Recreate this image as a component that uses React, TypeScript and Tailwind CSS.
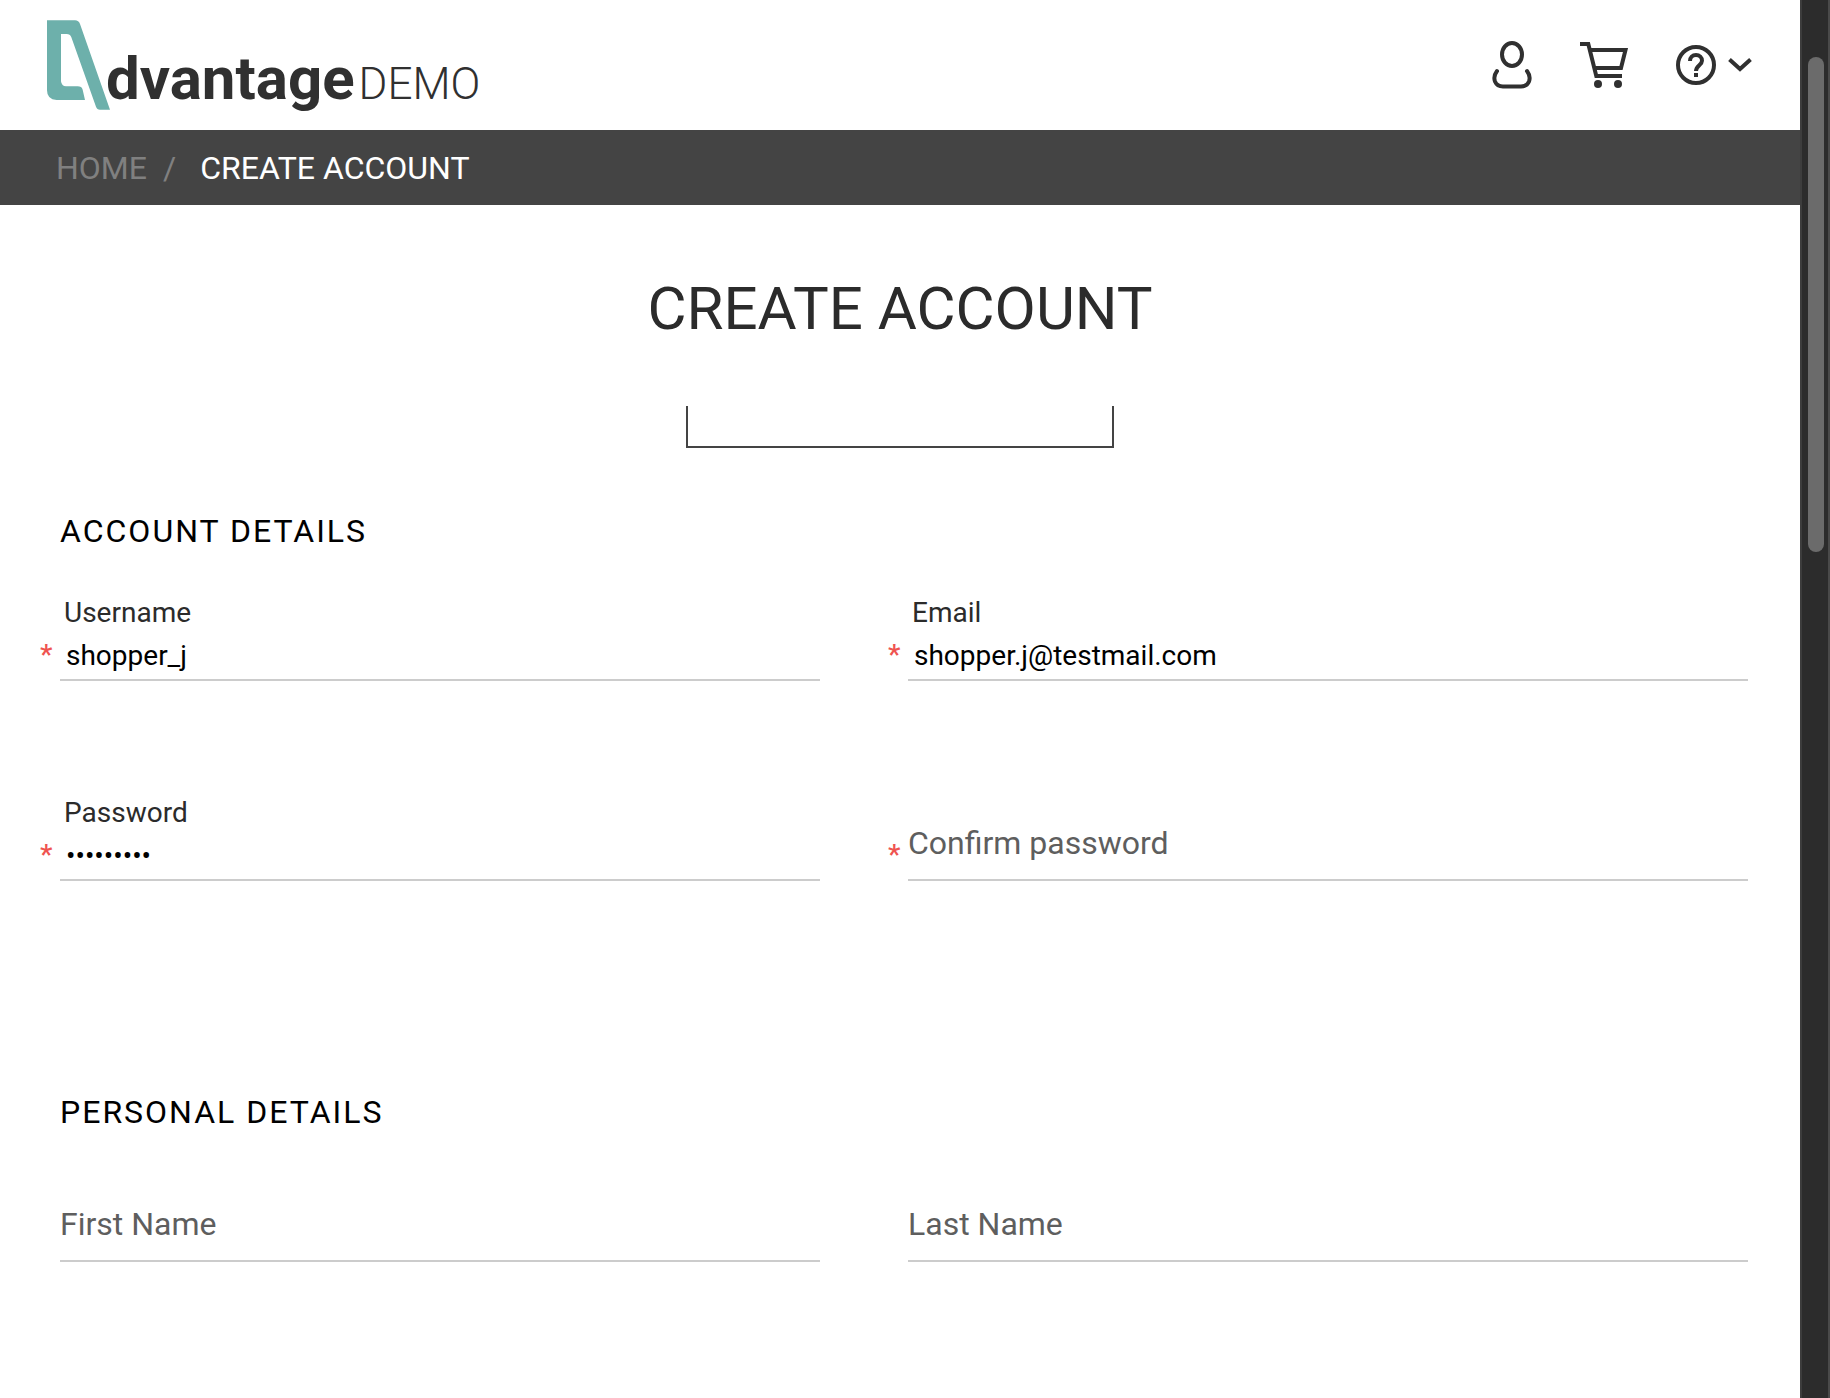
import { useId, useState } from "react";

function Logo() {
  return (
    <a href="#home" aria-label="Advantage DEMO" className="flex items-start text-[#303030]">
      <svg viewBox="51 60 189 268" className="h-[90px] w-[63px] fill-[#6db0ab]" aria-hidden="true">
        <path d="M51 60H135Q146 60 150 71L240 328H210Q201 328 198 319L124 111Q120 101 110 101H93V243Q95 258 108 258H143Q155 258 158 268L165 299H80Q51 298 51 270Z" />
      </svg>
      <span className="-ml-1 flex items-baseline gap-1 pt-[19px]">
        <span className="text-[60px] leading-[80px] font-bold">dvantage</span>
        <span className="text-[44px] leading-[80px] font-light">DEMO</span>
      </span>
    </a>
  );
}

function UserIcon() {
  return (
    <svg viewBox="0 0 40 48" className="h-12 w-10" fill="none" stroke="currentColor" strokeWidth="4" strokeLinecap="round" aria-hidden="true">
      <ellipse cx="20" cy="13.5" rx="10" ry="11.5" />
      <path d="M5 30C2 34 1.7 37 3 40.5C4.5 44 7 45.5 11 45.5H29C33 45.5 35.5 44 37 40.5C38.3 37 38 34 35 30" />
    </svg>
  );
}

function CartIcon() {
  return (
    <svg viewBox="0 0 48 46" className="h-[46px] w-12" fill="none" stroke="currentColor" strokeWidth="4" aria-hidden="true">
      <path d="M0 2H8.3L16.3 34H42" />
      <path d="M10 8H45.5L41 26H15" />
      <circle cx="18" cy="42" r="4" fill="currentColor" stroke="none" />
      <circle cx="38" cy="42" r="4" fill="currentColor" stroke="none" />
    </svg>
  );
}

function HelpIcon() {
  return (
    <svg viewBox="0 0 40 40" className="size-10" fill="none" stroke="currentColor" strokeWidth="4" aria-hidden="true">
      <circle cx="20" cy="20" r="18" />
      <path d="M14 16C14 12.5 16.5 10 20 10C23.5 10 26 12.5 26 15.7C26 20 20 20.5 20 26" />
      <path d="M18 30H22" />
    </svg>
  );
}

function ChevronIcon() {
  return (
    <svg viewBox="0 0 24 14" className="h-[14px] w-6" fill="none" stroke="currentColor" strokeWidth="4" aria-hidden="true">
      <path d="M1.5 1.5L12 11L22.5 1.5" />
    </svg>
  );
}

type FieldProps = { label: string; type?: string; initial?: string; required?: boolean };

function Field({ label, type = "text", initial = "", required = false }: FieldProps) {
  const id = useId();
  const [value, setValue] = useState(initial);
  const filled = value !== "";
  return (
    <div className="flex h-[88px] items-end">
      <span className="w-5 shrink-0 pb-[10px] text-[28px] leading-8 font-medium text-[#ef5350]" aria-hidden="true">
        {required ? "*" : ""}
      </span>
      <div className="relative flex-1">
        <label
          htmlFor={id}
          className={
            filled
              ? "block pl-1 text-[28px] leading-10 text-[#2b2b2b]"
              : "absolute bottom-[18px] left-0 text-[32px] leading-10 text-[#5e5e5e]"
          }
        >
          {label}
        </label>
        <input
          id={id}
          type={type}
          value={value}
          required={required}
          onChange={(e) => setValue(e.target.value)}
          className="block h-12 w-full border-b-2 border-[#ccc] bg-transparent px-[6px] pb-[2px] text-[28px] text-black outline-none"
        />
      </div>
    </div>
  );
}

function Section({ title, fields }: { title: string; fields: FieldProps[] }) {
  return (
    <section>
      <h2 className="pl-5 text-[32px] leading-10 tracking-[2px] text-black">{title}</h2>
      <div className="mt-[42px] grid grid-cols-[39fr_43fr] gap-x-[68px] gap-y-28">
        {fields.map((f) => (
          <Field key={f.label} {...f} />
        ))}
      </div>
    </section>
  );
}

export default function App() {
  return (
    <div className="flex min-h-screen bg-white font-[Roboto,sans-serif]">
      <div className="min-w-0 flex-1">
        <header className="flex h-[130px] items-start justify-between pt-5 pr-12 pl-[47px]">
          <Logo />
          <nav className="flex h-[90px] items-center gap-12 text-[#303030]">
            <button type="button" aria-label="Account">
              <UserIcon />
            </button>
            <button type="button" aria-label="Cart">
              <CartIcon />
            </button>
            <button type="button" aria-label="Help" className="flex items-center gap-3">
              <HelpIcon />
              <ChevronIcon />
            </button>
          </nav>
        </header>

        <nav className="flex h-[75px] items-center bg-[#444] pl-14 text-[32px] leading-10 text-white" aria-label="Breadcrumb">
          <a href="#home" className="text-[#808080]">
            HOME
          </a>
          <span className="pr-6 pl-4 text-[#808080]">/</span>
          <span>CREATE ACCOUNT</span>
        </nav>

        <main>
          <h1 className="pt-16 text-center text-[60px] leading-[80px] text-[#2b2b2b]">CREATE ACCOUNT</h1>
          <div className="mx-auto mt-[57px] h-[42px] w-[428px] border-2 border-t-0 border-[#444]" />
          <form className="flex flex-col gap-[211px] pt-[63px] pr-[52px] pl-10">
            <Section
              title="ACCOUNT DETAILS"
              fields={[
                { label: "Username", initial: "shopper_j", required: true },
                { label: "Email", type: "email", initial: "shopper.j@testmail.com", required: true },
                { label: "Password", type: "password", initial: "shopper12", required: true },
                { label: "Confirm password", type: "password", required: true },
              ]}
            />
            <Section title="PERSONAL DETAILS" fields={[{ label: "First Name" }, { label: "Last Name" }]} />
          </form>
        </main>
      </div>

      <div className="w-[30px] shrink-0 border-r-2 border-l-2 border-r-[#4a4a4a] border-l-[#3d3d3d] bg-[#2c2c2c] pt-[57px] pl-[6px]" aria-hidden="true">
        <div className="h-[495px] w-4 rounded-full bg-[#6b6b6b]" />
      </div>
    </div>
  );
}
